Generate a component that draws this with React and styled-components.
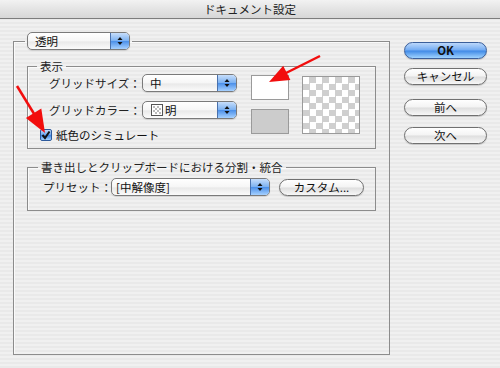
import React from 'react';
import styled, { createGlobalStyle } from 'styled-components';

const GlobalStyle = createGlobalStyle`
  html, body {
    margin: 0;
    padding: 0;
  }
  body {
    width: 500px;
    height: 368px;
    overflow: hidden;
    font-family: "Noto Sans CJK JP", "Noto Sans", sans-serif;
    font-size: 11.5px;
    color: #111;
  }
`;

const Window = styled.div`
  position: relative;
  width: 500px;
  height: 368px;
  display: flex;
  flex-direction: column;
  background: repeating-linear-gradient(#f0f0f0 0 2px, #e9e9e9 2px 4px);
`;

const TitleBar = styled.div`
  height: 18px;
  border-bottom: 1px solid #7c7c7c;
  background: linear-gradient(#f2f2f2, #d6d6d6);
  display: flex;
  align-items: center;
  justify-content: center;
  line-height: 18px;
  color: #222;
`;

const Body = styled.div`
  flex: 1;
  display: flex;
  align-items: flex-start;
  gap: 14px;
  padding: 13px 0 0 13px;
`;

const Group = styled.fieldset`
  margin: ${p => p.$top || 0}px 0 0 0;
  min-width: 0;
  box-sizing: border-box;
  width: ${p => p.$w}px;
  height: ${p => p.$h}px;
  border: 1px solid #8c8c8c;
  box-shadow: inset 1px 1px 0 #fafafa;
  padding: ${p => p.$pad};
`;

const Legend = styled.legend`
  padding: 0 3px;
  margin-left: ${p => p.$ml}px;
  line-height: 14px;
  color: #222;
`;

const PopupLegend = styled.legend`
  padding: 0 2px;
  margin-left: ${p => p.$ml}px;
  line-height: 0;
`;

const Popup = styled.div`
  width: ${p => p.$w}px;
  height: 18px;
  box-sizing: border-box;
  border: 1px solid #7a7a7a;
  border-radius: 5px;
  background: linear-gradient(#ffffff, #f6f6f6 50%, #e9e9e9 55%, #fbfbfb);
  box-shadow: 0 1px 1px rgba(0, 0, 0, 0.12);
  display: flex;
  align-items: stretch;
  overflow: hidden;
  flex-shrink: 0;
`;

const PopupText = styled.span`
  flex: 1;
  display: flex;
  align-items: center;
  gap: 2px;
  padding-left: ${p => p.$pl || 7}px;
  line-height: 16px;
  white-space: nowrap;
`;

const Stepper = styled.span`
  width: 18px;
  border-left: 1px solid #4a71ac;
  background: linear-gradient(#c7defb, #7db2f1 48%, #4c90e9 52%, #a6d1ff);
  display: flex;
  align-items: center;
  justify-content: center;
`;

const Controls = styled.div`
  width: 196px;
  display: flex;
  flex-direction: column;
  gap: 9px;
`;

const Row = styled.div`
  display: flex;
  align-items: center;
  padding-left: ${p => p.$indent || 0}px;
`;

const Label = styled.span`
  width: ${p => p.$w}px;
  flex-shrink: 0;
  white-space: nowrap;
  line-height: 18px;
  color: #222;
`;

const DisplayArea = styled.div`
  display: flex;
  align-items: flex-start;
  padding-top: 1px;
`;

const Swatches = styled.div`
  margin: 1px 0 0 15px;
  display: flex;
  flex-direction: column;
  gap: 9px;
`;

const Swatch = styled.div`
  width: 38px;
  height: 25px;
  box-sizing: border-box;
  border: 1px solid #9a9a9a;
  background: ${p => p.$color};
`;

const Checker = styled.div`
  margin: 2px 0 0 13px;
  width: 58px;
  height: 58px;
  box-sizing: border-box;
  border: 1px solid #9a9a9a;
  background-color: #fff;
  background-image: conic-gradient(#cfcfcf 25%, #fff 0 50%, #cfcfcf 0 75%, #fff 0);
  background-size: 13px 13px;
`;

const Checkbox = styled.span`
  width: 12px;
  height: 12px;
  box-sizing: border-box;
  border: 1px solid #2d5a9c;
  border-radius: 2px;
  background: linear-gradient(#c2dbfa, #6ea6ee 48%, #3d84e3 52%, #a3d2ff);
  display: flex;
  align-items: center;
  justify-content: center;
  margin-right: 4px;
`;

const CheckRow = styled(Row)`
  height: 14px;
  line-height: 14px;
`;

const Buttons = styled.div`
  width: 83px;
  display: flex;
  flex-direction: column;
  padding-top: 10px;
`;

const Button = styled.button`
  width: ${p => p.$w || 83}px;
  height: 17px;
  margin-top: ${p => p.$gap || 0}px;
  padding: 0;
  box-sizing: border-box;
  border: 1px solid ${p => (p.$primary ? '#3b5f9a' : '#707070')};
  border-radius: 9px;
  background: ${p => (p.$primary
    ? 'linear-gradient(#bcd8fb, #72abf2 48%, #3f89e6 52%, #9fd3ff)'
    : 'linear-gradient(#ffffff, #f3f3f3 48%, #dedede 52%, #f7f7f7)')};
  box-shadow: 0 1px 1px rgba(0, 0, 0, 0.18);
  font-family: inherit;
  font-size: 11.5px;
  font-weight: ${p => (p.$primary ? 700 : 400)};
  line-height: 15px;
  color: #111;
  flex-shrink: 0;
`;

const Overlay = styled.svg`
  position: absolute;
  left: 0;
  top: 0;
  pointer-events: none;
`;

function Arrows() {
  return (
    <svg width="8" height="10" viewBox="0 0 8 10">
      <path d="M4 1 L6.5 4 L1.5 4 Z" fill="#111" />
      <path d="M4 9 L6.5 6 L1.5 6 Z" fill="#111" />
    </svg>
  );
}

function Select({ width, children, pl }) {
  return (
    <Popup $w={width}>
      <PopupText $pl={pl}>{children}</PopupText>
      <Stepper><Arrows /></Stepper>
    </Popup>
  );
}

function ColorIcon() {
  return (
    <svg width="12" height="12" viewBox="0 0 12 12">
      <rect x="0.5" y="0.5" width="11" height="11" fill="#fff" stroke="#555" />
      <rect x="2" y="2" width="2" height="2" fill="#bbb" />
      <rect x="6" y="2" width="2" height="2" fill="#bbb" />
      <rect x="4" y="4" width="2" height="2" fill="#bbb" />
      <rect x="8" y="4" width="2" height="2" fill="#bbb" />
      <rect x="2" y="6" width="2" height="2" fill="#bbb" />
      <rect x="6" y="6" width="2" height="2" fill="#bbb" />
      <rect x="4" y="8" width="2" height="2" fill="#bbb" />
      <rect x="8" y="8" width="2" height="2" fill="#bbb" />
    </svg>
  );
}

export default function App() {
  return (
    <Window>
      <GlobalStyle />
      <TitleBar>ドキュメント設定</TitleBar>
      <Body>
        <Group $w={377} $h={323} $pad="9px 13px 0 13px">
          <PopupLegend $ml={-2}>
            <Select width={103}>透明</Select>
          </PopupLegend>

          <Group $w={349} $h={90} $pad="0 12px 0 12px">
            <Legend $ml={-3}>表示</Legend>
            <DisplayArea>
              <Controls>
                <Row $indent={9}>
                  <Label $w={93}>グリッドサイズ：</Label>
                  <Select width={95}>中</Select>
                </Row>
                <Row $indent={9}>
                  <Label $w={93}>グリッドカラー：</Label>
                  <Select width={95} pl={8}><ColorIcon />明</Select>
                </Row>
                <CheckRow>
                  <Checkbox>
                    <svg width="10" height="10" viewBox="0 0 10 10">
                      <path d="M1.5 5 L4 8 L8.5 1.5" fill="none" stroke="#111" strokeWidth="2" />
                    </svg>
                  </Checkbox>
                  紙色のシミュレート
                </CheckRow>
              </Controls>
              <Swatches>
                <Swatch $color="#ffffff" />
                <Swatch $color="#cccccc" />
              </Swatches>
              <Checker />
            </DisplayArea>
          </Group>

          <Group $top={11} $w={349} $h={51} $pad="4px 12px 0 12px">
            <Legend $ml={-2}>書き出しとクリップボードにおける分割・統合</Legend>
            <Row $indent={3}>
              <Label $w={68}>プリセット：</Label>
              <Select width={159} pl={4}>[中解像度]</Select>
              <Button $w={85} style={{ marginLeft: 9 }}>カスタム...</Button>
            </Row>
          </Group>
        </Group>

        <Buttons>
          <Button $primary>OK</Button>
          <Button $gap={9}>キャンセル</Button>
          <Button $gap={14}>前へ</Button>
          <Button $gap={11}>次へ</Button>
        </Buttons>
      </Body>

      <Overlay width="500" height="368" viewBox="0 0 500 368">
        <line x1="17" y1="86" x2="36" y2="117" stroke="#f20d0d" strokeWidth="2.5" />
        <polygon points="45,133 25.9,117.9 41.3,108.5" fill="#f20d0d" />
        <line x1="320" y1="56" x2="284" y2="74" stroke="#f20d0d" strokeWidth="2.5" />
        <polygon points="269,82 283.2,65.8 290.4,80" fill="#f20d0d" />
      </Overlay>
    </Window>
  );
}
